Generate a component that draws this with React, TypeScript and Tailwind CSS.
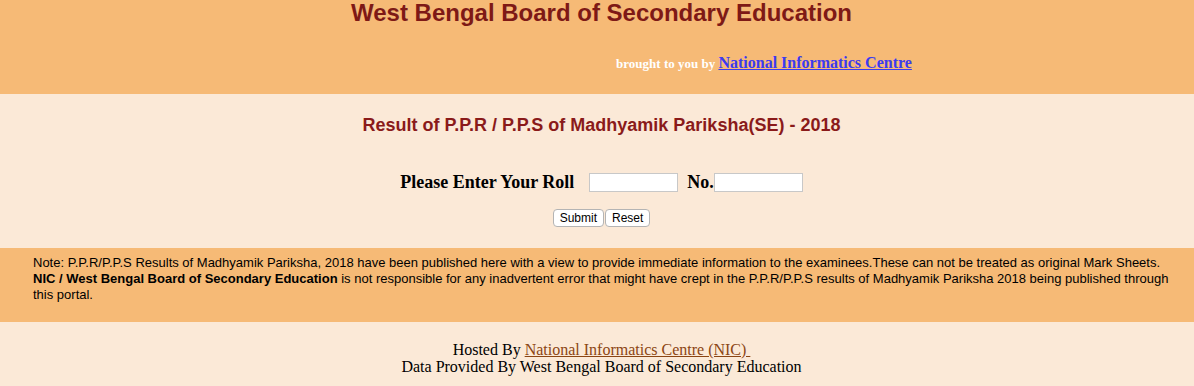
export default function App() {
  return (
    <div className="w-[1194px] h-[386px] bg-[#fbe9d7] font-['Liberation_Serif',serif] text-black overflow-hidden">
      {/* Header */}
      <div className="h-[94px] bg-[#f6ba76] pl-[9px] flex flex-col items-center">
        <h1 className="font-['Liberation_Sans',Arial,sans-serif] font-bold text-[24px] leading-[26px] text-[#7e1916]">
          West Bengal Board of Secondary Education
        </h1>
        <div className="mt-[28px] ml-[325px] text-[13px] font-bold text-white leading-[18px]">
          brought to you by{' '}
          <a href="#" className="text-[16px] text-[#3b3bf0] underline">
            National Informatics Centre
          </a>
        </div>
      </div>

      {/* Form */}
      <div className="h-[154px] pl-[9px] flex flex-col items-center">
        <h2 className="mt-[21px] font-['Liberation_Sans',Arial,sans-serif] font-bold text-[18px] leading-[21px] text-[#8a1a1a]">
          Result of P.P.R / P.P.S of Madhyamik Pariksha(SE) - 2018
        </h2>
        <div className="mt-[36px] flex items-center font-bold text-[18px] leading-[20px]">
          <span>Please Enter Your Roll</span>
          <input className="ml-[15px] w-[89px] h-[19px] bg-white border border-[#c8c8c8]" />
          <span className="ml-[9px]">No.</span>
          <input className="w-[89px] h-[19px] bg-white border border-[#c8c8c8]" />
        </div>
        <div className="mt-[17px] flex gap-[1px] font-['Liberation_Sans',Arial,sans-serif] text-[12px]">
          <button className="h-[18px] px-[6px] bg-white border border-[#b4b4b4] rounded-[4px] leading-[16px]">Submit</button>
          <button className="h-[18px] px-[6px] bg-white border border-[#b4b4b4] rounded-[4px] leading-[16px]">Reset</button>
        </div>
      </div>

      {/* Note */}
      <div className="h-[74px] bg-[#f6ba76] pl-[33px] pr-[20px] pt-[7px] font-['Liberation_Sans',Arial,sans-serif] text-[13px] leading-[16px]">
        Note: P.P.R/P.P.S Results of Madhyamik Pariksha, 2018 have been published here with a view to provide immediate information to the examinees.These can not be treated as original Mark Sheets.{' '}
        <b>NIC / West Bengal Board of Secondary Education</b> is not responsible for any inadvertent error that might have crept in the P.P.R/P.P.S results of Madhyamik Pariksha 2018 being published through this portal.
      </div>

      {/* Footer */}
      <div className="pt-[19px] pl-[9px] flex flex-col items-center text-[16px] leading-[17px]">
        <div>
          Hosted By{' '}
          <a href="#" className="text-[#8b4513] underline">National Informatics Centre (NIC)&nbsp;</a>
        </div>
        <div>Data Provided By West Bengal Board of Secondary Education</div>
      </div>
    </div>
  )
}
